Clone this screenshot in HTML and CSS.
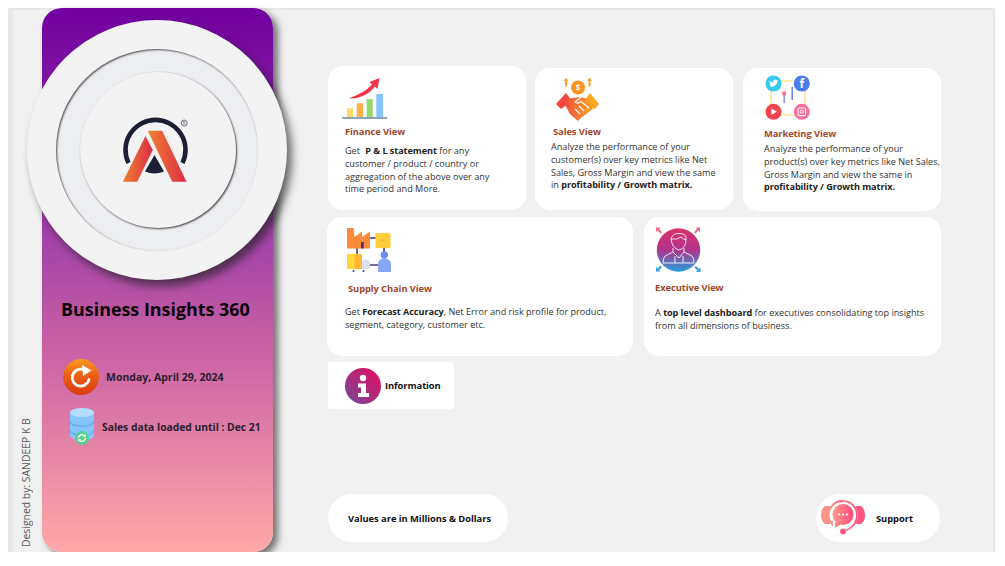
FILE: index.html
```html
<!DOCTYPE html>
<html lang="en">
<head>
<meta charset="utf-8">
<title>Business Insights 360</title>
<link rel="stylesheet" href="styles.css">
</head>
<body>
<div class="page">
  <div class="credit">Designed by: SANDEEP K B</div>
  <aside class="sidebar">
    <div class="disc">
      <div class="ring">
        <div class="hub">
          <svg class="logo" viewBox="2.500 0 130 120" aria-hidden="true">
            <defs>
              <linearGradient id="lgA" x1="0" y1="0" x2="1" y2="0"><stop offset="0" stop-color="#f08030"/><stop offset="1" stop-color="#dc2c48"/></linearGradient>
            </defs>
            <path d="M38 73A30 30 0 1 1 92 73" fill="none" stroke="#1d2035" stroke-width="4.6"/>
            <path d="M64 65L73.500 81.500Q64 85.500 54.500 81.500Z" fill="#1d2035"/>
            <path d="M32.300 91.700L55 46L62.300 60L46.700 91.700Z" fill="url(#lgA)"/>
            <path d="M57.300 40.700L71.700 40.700L96 91.700L81.700 91.700Z" fill="url(#lgA)"/>
            <circle cx="93.700" cy="33" r="3" fill="none" stroke="#55586a" stroke-width=".8"/>
            <path d="M92.700 34.700V31.500H94.500Q95 32.500 93.800 33L95 34.700" fill="none" stroke="#55586a" stroke-width=".6"/>
          </svg>
        </div>
      </div>
    </div>
    <h1 class="title">Business Insights 360</h1>
    <div class="status status-date">
      <svg class="status-icon" viewBox="0 0 36 36" aria-hidden="true">
        <defs>
          <linearGradient id="lgR" x1="0" y1="0" x2="0" y2="1"><stop offset="0" stop-color="#fa9a20"/><stop offset=".5" stop-color="#ea5c14"/><stop offset="1" stop-color="#d93a10"/></linearGradient>
        </defs>
        <circle cx="18" cy="18" r="18" fill="url(#lgR)"/>
        <path d="M26 20.500A8.500 8.500 0 1 1 19.500 10.300" fill="none" stroke="#fff" stroke-width="2.800" stroke-linecap="round"/>
        <path d="M19 6L28.500 11.500L20 17Z" fill="#fff"/>
      </svg>
      <span>Monday, April 29, 2024</span>
    </div>
    <div class="status status-db">
      <svg class="db-icon" viewBox="0 0 26 39" aria-hidden="true">
        <path d="M1 6V28Q1 33 13 33T25 28V6Z" fill="#84c5fb"/>
        <path d="M1 14Q1 19 13 19T25 14M1 23Q1 28 13 28T25 23" fill="none" stroke="#5fa8ee" stroke-width="1.200"/>
        <ellipse cx="13" cy="5.500" rx="12" ry="4.500" fill="#b4ddfc"/>
        <circle cx="13" cy="31" r="7" fill="#58d091"/>
        <path d="M9.500 31A3.500 3.500 0 0 1 15.800 29M16.500 31A3.500 3.500 0 0 1 10.200 33" fill="none" stroke="#fff" stroke-width="1.300"/>
        <path d="M16.800 26.800V30H13.800ZM9.200 35.200V32H12.200Z" fill="#fff"/>
      </svg>
      <span>Sales data loaded until : Dec 21</span>
    </div>
  </aside>
  <main class="main">
    <div class="row row-top">
      <section class="card card-finance">
        <svg class="icon icon-finance" viewBox="7 7 46 43" aria-hidden="true">
          <rect x="12" y="38.300" width="6" height="9" fill="#ffd866"/>
          <rect x="21.700" y="33.300" width="6.300" height="14" fill="#ffb04a"/>
          <rect x="31.700" y="29" width="6" height="18.300" fill="#96d86a"/>
          <rect x="41.300" y="24" width="6.700" height="23.300" fill="#85c4ff"/>
          <rect x="7.300" y="47.300" width="45" height="1.400" fill="#5b7f9f"/>
          <path d="M14 28.500C25 24 32 20 37 14.500L34.500 12L44.500 8L42.500 19L40 16.500C34 24 25 29 14 28.500Z" fill="#f4344a"/>
        </svg>
        <h2>Finance View</h2>
        <p>Get <b class="lead">P &amp; L statement</b> for any customer / product / country or aggregation of the above over any time period and More.</p>
      </section>
      <section class="card card-sales">
        <svg class="icon icon-sales" viewBox="0 0 46 46" aria-hidden="true">
          <defs>
            <linearGradient id="lgS" x1="0" y1="0" x2="1" y2="0"><stop offset="0" stop-color="#f0483e"/><stop offset="1" stop-color="#ffa726"/></linearGradient>
          </defs>
          <circle cx="23" cy="11.500" r="7" fill="#ff9320"/>
          <text x="23" y="14.500" class="dollar">$</text>
          <path d="M11 1.500L13.500 5H12V10.500H10V5H8.500ZM34.500 1.500L37 5H35.500V10.500H33.500V5H32Z" fill="#ffa030"/>
          <path d="M1 28L11 17L17 25L6 33Z" fill="#f0483e"/>
          <path d="M44 28L35 17L28 27L40 33Z" fill="#ffa726"/>
          <path d="M8 25L17 22L25 21L34 23L38 33L27 41L23 45L15 38Z" fill="url(#lgS)"/>
          <path d="M26 21L20 26Q22 28.500 26 25.500L34 32M29 35L24 30M25 38L20 33" fill="none" stroke="#fff" stroke-width="1.200"/>
        </svg>
        <h2>Sales View</h2>
        <p class="lines">Analyze the performance of your<br>customer(s) over key metrics like Net<br>Sales, Gross Margin and view the same<br>in <b>profitability / Growth matrix.</b></p>
      </section>
      <section class="card card-marketing">
        <svg class="icon icon-marketing" viewBox="0 0 46 46" aria-hidden="true">
          <rect x="6" y="6" width="34" height="34" rx="8" fill="none" stroke="#ffd56a" stroke-width="1.200"/>
          <rect x="18.500" y="17" width="1.400" height="11" fill="#7d8bd8"/>
          <rect x="17.300" y="16.500" width="3.800" height="4" fill="#ff6d9a"/>
          <rect x="26.500" y="12" width="1.400" height="13" fill="#5b78f0"/>
          <circle cx="8.500" cy="8.500" r="8" fill="#35c8f0"/>
          <circle cx="36.800" cy="8.500" r="8" fill="#4a7cf0"/>
          <circle cx="8.500" cy="36.800" r="8" fill="#f0444e"/>
          <circle cx="36.800" cy="36.800" r="8" fill="#ff6d9a"/>
          <path d="M4 11Q7 12.500 9.500 11Q12.500 9 12.500 6.500L13.500 5.500L12 5.600Q10.500 4 8.800 5Q7.500 6 8 7.500Q6 7.500 4.500 5.500Q4 7.500 5.500 8.800L4.500 8.500Q4.800 10 6 10.500Q5 11 4 11Z" fill="#fff"/>
          <text x="36.800" y="12.500" class="fb">f</text>
          <path d="M6.500 33.800L12 36.800L6.500 39.800Z" fill="#fff"/>
          <rect x="33" y="33" width="7.600" height="7.600" rx="1.500" fill="none" stroke="#fff" stroke-width="1.100"/>
          <circle cx="36.800" cy="36.800" r="1.600" fill="none" stroke="#fff" stroke-width=".9"/>
        </svg>
        <h2>Marketing View</h2>
        <p class="lines">Analyze the performance of your<br>product(s) over key metrics like Net Sales,<br>Gross Margin and view the same in<br><b>profitability / Growth matrix.</b></p>
      </section>
    </div>
    <div class="row row-mid">
      <section class="card card-supply">
        <svg class="icon icon-supply" viewBox="0 0 46 44" aria-hidden="true">
          <path d="M23 10H29M37 19V25M23 37H31M10 20V26" fill="none" stroke="#4a3a70" stroke-width="1.600"/>
          <path d="M0 0H6.500L7.500 9L15 3.500V9L23 3.500V20.500H0Z" fill="#ff8a3c"/>
          <rect x="14" y="14" width="2.800" height="6.500" fill="#4a3a70"/>
          <rect x="28.500" y="5" width="15" height="15" rx=".8" fill="#ffce3a"/>
          <rect x="34" y="11.500" width="4" height="1.200" fill="#ff9a3c"/>
          <rect x="0" y="26" width="15" height="15" fill="#ffd83a"/>
          <rect x="7.500" y="26" width="7.500" height="15" fill="#ffb638"/>
          <circle cx="19" cy="35.500" r="4" fill="#d8e0ee"/>
          <rect x="15" y="35" width="8" height="6" fill="#d8e0ee"/>
          <circle cx="37.300" cy="27" r="3.700" fill="#6b8df0"/>
          <path d="M31 44V36Q31 31 37.300 30.500Q44 31 44 36V44Z" fill="#85a6f7"/>
          <circle cx="6.500" cy="43" r="1" fill="#4a3a70"/>
          <circle cx="16.500" cy="43" r="1" fill="#4a3a70"/>
        </svg>
        <h2>Supply Chain View</h2>
        <p class="lines">Get <b>Forecast Accuracy</b>, Net Error and risk profile for product,<br>segment, category, customer etc.</p>
      </section>
      <section class="card card-exec">
        <svg class="icon icon-exec" viewBox="0 0 47 47" aria-hidden="true">
          <defs>
            <linearGradient id="lgE" x1="0" y1="0" x2="0" y2="1"><stop offset="0" stop-color="#dc3268"/><stop offset=".5" stop-color="#b0338e"/><stop offset="1" stop-color="#249fdc"/></linearGradient>
          </defs>
          <circle cx="23.500" cy="24" r="21.700" fill="url(#lgE)"/>
          <path d="M16 13Q17 7 25 7.500Q32 8 31 14Q31 22 24 24Q17 22 16 13ZM16 13Q22 14 26 11Q28 13 31 14M18 22V26L10 30Q8 32 8 37H39Q39 32 37 30L29 26V22M18 26L24 32L29 26M20 30V37M28 30V37" fill="none" stroke="#fff" stroke-opacity=".85" stroke-width="1"/>
          <path d="M1 1.500H5.500L4 3L7 6L5.500 7.500L2.500 4.500L1 6ZM45 1.500H40.500L42 3L39 6L40.500 7.500L43.500 4.500L45 6Z" fill="#ef6d84"/>
          <path d="M1 45.500H5.500L4 44L7 41L5.500 39.500L2.500 42.500L1 41ZM45.500 46H41L42.500 44.500L39.500 41.500L41 40L44 43L45.500 41.500Z" fill="#2fa4dc"/>
        </svg>
        <h2>Executive View</h2>
        <p class="lines">A <b>top level dashboard</b> for executives consolidating top insights<br>from all dimensions of business.</p>
      </section>
    </div>
    <div class="info">
      <svg class="info-icon" viewBox="0 0 36 36" aria-hidden="true">
        <defs>
          <linearGradient id="lgI" x1="0" y1="1" x2="1" y2="0"><stop offset="0" stop-color="#6f4a9c"/><stop offset="1" stop-color="#ee0a5c"/></linearGradient>
        </defs>
        <circle cx="18" cy="18" r="18" fill="url(#lgI)"/>
        <circle cx="18" cy="10" r="3.200" fill="#fff"/>
        <path d="M13 15.500H21V25H24V29H13V25H16V19.500H13Z" fill="#fff"/>
      </svg>
      <span>Information</span>
    </div>
    <div class="row row-foot">
      <div class="pill pill-values">Values are in Millions &amp; Dollars</div>
      <div class="pill pill-support">
        <svg class="support-icon" viewBox="0 0 44 36" aria-hidden="true">
          <defs>
            <linearGradient id="lgH" x1="0" y1="0" x2="1" y2="0"><stop offset="0" stop-color="#ff9a8b"/><stop offset="1" stop-color="#ff4d7d"/></linearGradient>
          </defs>
          <path d="M9 6H4Q0 9 0 15Q0 21 4 24H9ZM35 6H40Q44 9 44 15Q44 21 40 24H35Z" fill="url(#lgH)"/>
          <circle cx="22" cy="15" r="15" fill="#fff"/>
          <path d="M22 1A14 14 0 0 1 36 15C36 23 30 30 22 31" fill="none" stroke="url(#lgH)" stroke-width="1.800"/>
          <path d="M22 1A14 14 0 0 0 11 24L11 21" fill="none" stroke="url(#lgH)" stroke-width="1.800"/>
          <circle cx="22" cy="14.500" r="10.500" fill="url(#lgH)"/>
          <path d="M14 22L14 28L20 24Z" fill="url(#lgH)"/>
          <circle cx="22" cy="31.500" r="3" fill="#ff5c80"/>
          <circle cx="18" cy="14.500" r="1.100" fill="#fff"/>
          <circle cx="22" cy="14.500" r="1.100" fill="#fff"/>
          <circle cx="26" cy="14.500" r="1.100" fill="#fff"/>
        </svg>
        <span>Support</span>
      </div>
    </div>
  </main>
</div>
</body>
</html>
```

FILE: styles.css
```css
* { box-sizing: border-box; }
html, body { margin: 0; padding: 0; background: #fff; }
body {
  font-family: "Open Sans", "Noto Sans", sans-serif;
  color: #333;
  overflow: hidden;
}
h1, h2, p { margin: 0; }

.page {
  margin: 8px 10px 0 8px;
  height: 544px;
  display: flex;
  background: #f1f1f1;
  border-top: 2px solid #e6e6e6;
  border-left: 5px solid #e8e8e8;
  border-right: 2px solid #e6e6e6;
}

.credit {
  width: 29px;
  flex: none;
  display: flex;
  align-items: center;
  justify-content: flex-start;
  writing-mode: vertical-rl;
  transform: rotate(180deg);
  font-size: 10.400px;
  line-height: 13px;
  color: #5a5a5a;
  white-space: nowrap;
  padding: 5px 7px 0 9px;
}

.sidebar {
  width: 231px;
  flex: none;
  margin-top: -2px;
  padding-top: 12px;
  display: flex;
  flex-direction: column;
  border-radius: 20px;
  background: linear-gradient(180deg, #7000a0 0%, #a646a8 45%, #c860a4 62%, #ffa8a8 100%);
  box-shadow: 5px 4px 7px rgba(60, 60, 60, .7);
}

.disc {
  width: 260px;
  height: 260px;
  flex: none;
  align-self: center;
  margin-right: 1px;
  display: flex;
  align-items: center;
  justify-content: center;
  border-radius: 50%;
  background: #f3f3f3;
  box-shadow: 5px 6px 8px rgba(30, 30, 30, .65);
}
.ring {
  width: 202px;
  height: 202px;
  display: flex;
  align-items: center;
  justify-content: center;
  border-radius: 50%;
  background: #edeef2;
  box-shadow: inset 1px 1px 2px rgba(40, 40, 40, .8);
}
.hub {
  width: 156px;
  height: 156px;
  margin-left: 2px;
  display: flex;
  align-items: center;
  justify-content: center;
  border-radius: 50%;
  background: #f3f3f3;
  box-shadow: 1px 1px 2px rgba(40, 40, 40, .85);
}
.logo { width: 130px; height: 120px; display: block; }

.title {
  margin-top: 17px;
  padding-left: 19px;
  font-size: 17.900px;
  line-height: 24px;
  font-weight: 700;
  color: #0a0008;
  white-space: nowrap;
}

.status {
  display: flex;
  align-items: center;
  font-weight: 700;
  color: #2c1c30;
  white-space: nowrap;
}
.status-date { margin-top: 38px; padding-left: 21px; gap: 7px; font-size: 10.500px; }
.status-db { margin-top: 12px; padding-left: 27px; gap: 7px; font-size: 10.300px; }
.status-icon { width: 36px; height: 36px; display: block; flex: none; }
.db-icon { width: 26px; height: 39px; display: block; flex: none; }

.main {
  flex: 1;
  min-width: 0;
  padding: 56px 0 10px 54px;
  display: flex;
  flex-direction: column;
}

.row { display: flex; }
.row-top { align-items: flex-end; margin-left: 1px; }
.row-mid { margin-top: 7px; gap: 11px; }
.row-foot { margin-top: auto; margin-left: 1px; width: 612px; justify-content: space-between; }

.card {
  background: #fff;
  border-radius: 15px;
  font-size: 9.100px;
  line-height: 12.800px;
}
.card h2 {
  font-size: 9.400px;
  line-height: 14px;
  font-weight: 700;
  letter-spacing: -.1px;
  color: #a0482b;
  white-space: nowrap;
}
.card b { font-weight: 700; color: #222; letter-spacing: -.05px; }
.card .lead { margin-left: 3px; }
.card .lines { white-space: nowrap; }
.icon { display: block; }

.card-finance {
  width: 198px;
  height: 144px;
  margin-right: 9px;
  padding: 11px 0 0 17px;
}
.card-finance .icon { width: 46px; height: 43px; margin-left: -3px; }
.card-finance h2 { margin-top: 5px; }
.card-finance p { margin-top: 6px; width: 160px; }

.card-sales {
  width: 198px;
  height: 142px;
  margin-right: 10px;
  padding: 8px 0 0 16px;
}
.card-sales .icon { width: 46px; height: 46px; margin-left: 4px; }
.card-sales h2 { margin: 3px 0 0 2px; }
.card-sales p { margin-top: 2px; }

.card-marketing {
  width: 198px;
  height: 143px;
  margin-bottom: -1px;
  padding: 7px 0 0 21px;
}
.card-marketing .icon { width: 46px; height: 46px; margin-left: 1px; }
.card-marketing h2 { margin-top: 6px; }
.card-marketing p { margin-top: 2px; }

.card-supply {
  width: 306px;
  height: 139px;
  padding: 11px 0 0 18px;
}
.card-supply .icon { width: 46px; height: 44px; margin-left: 2px; }
.card-supply h2 { margin: 10px 0 0 3px; }
.card-supply p { margin-top: 10px; }

.card-exec {
  width: 297px;
  height: 139px;
  padding: 9px 0 0 11px;
}
.card-exec .icon { width: 47px; height: 47px; }
.card-exec h2 { margin-top: 8px; }
.card-exec p { margin-top: 12px; }

.info {
  width: 126px;
  height: 47px;
  margin: 6px 0 0 1px;
  padding-left: 17px;
  display: flex;
  align-items: center;
  gap: 4px;
  background: #fff;
  border-radius: 3px;
  font-size: 9.400px;
  font-weight: 700;
  letter-spacing: -.1px;
  color: #111;
}
.info-icon { width: 36px; height: 36px; display: block; flex: none; }

.pill {
  height: 48px;
  border-radius: 24px;
  background: #fff;
  display: flex;
  align-items: center;
  font-size: 9.400px;
  font-weight: 700;
  letter-spacing: -.05px;
  color: #111;
  white-space: nowrap;
}
.pill-values { width: 180px; padding-left: 20px; }
.pill-support { width: 124px; padding-left: 5px; gap: 11px; }
.support-icon { width: 44px; height: 36px; display: block; flex: none; }

.dollar { font-size: 8px; font-weight: 700; fill: #fff; text-anchor: middle; }
.fb { font-size: 12px; font-weight: 700; fill: #fff; text-anchor: middle; }
```
